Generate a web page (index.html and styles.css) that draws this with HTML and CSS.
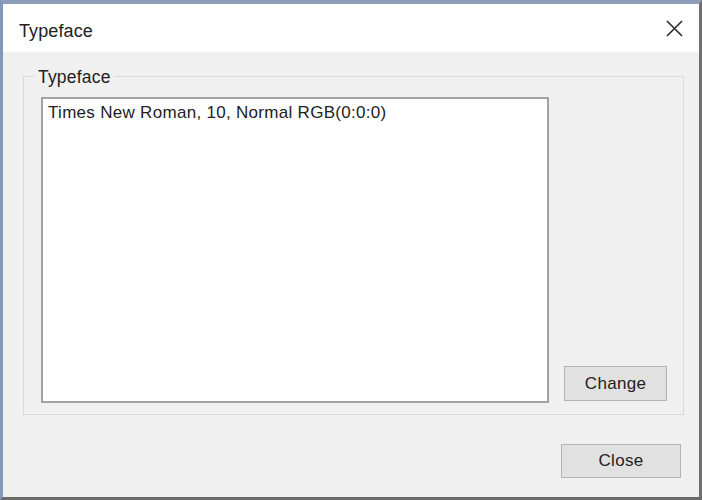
FILE: index.html
```html
<!DOCTYPE html>
<html>
<head>
<meta charset="utf-8">
<link rel="stylesheet" href="styles.css">
</head>
<body>
<div class="window">
  <div class="titlebar">
    <span class="title">Typeface</span>
    <span class="close-x">
      <svg width="17" height="17" viewBox="0 0 17 17"><path d="M1 1 L16 16 M16 1 L1 16" stroke="#2b2b2b" stroke-width="1.6" fill="none"/></svg>
    </span>
  </div>
  <div class="content">
    <fieldset class="group">
      <legend class="group-label">Typeface</legend>
      <div class="group-inner">
        <div class="listbox">
          <div class="item">Times New Roman, 10, Normal RGB(0:0:0)</div>
        </div>
        <button class="btn btn-change">Change</button>
      </div>
    </fieldset>
    <div class="footer">
      <button class="btn btn-close">Close</button>
    </div>
  </div>
</div>
</body>
</html>
```
FILE: styles.css
```css
html, body {
  margin: 0;
  padding: 0;
  width: 702px;
  height: 500px;
  overflow: hidden;
}
body {
  font-family: "Liberation Sans", Arial, sans-serif;
  color: #1e1e1e;
  background: #f0f0f0;
}
.window {
  box-sizing: border-box;
  width: 702px;
  height: 500px;
  border-style: solid;
  border-width: 4px 3px 3px 3px;
  border-color: #8d9cb9 #707070 #6a6a6a #8397bb;
  display: flex;
  flex-direction: column;
  background: #f0f0f0;
}
.titlebar {
  height: 48px;
  flex: none;
  background: #ffffff;
  display: flex;
  align-items: center;
  justify-content: space-between;
  padding: 0 16px 0 16px;
}
.title {
  font-size: 18px;
  line-height: 20px;
  letter-spacing: 0.1px;
  color: #222222;
  margin-top: 5px;
}
.close-x {
  display: flex;
  width: 17px;
  height: 17px;
  margin-top: 1px;
}
.content {
  flex: 1;
  display: flex;
  flex-direction: column;
  padding: 14px 15px 0 20px;
}
.group {
  margin: 0;
  padding: 11px 16px 11px 17px;
  border: 1px solid #d9d9d9;
  min-width: 0;
}
.group-label {
  font-size: 17.5px;
  line-height: 18px;
  letter-spacing: 0.2px;
  padding: 2px 3px 0 3px;
  margin-left: -6px;
  color: #222222;
}
.group-inner {
  display: flex;
  align-items: flex-end;
  justify-content: space-between;
}
.listbox {
  box-sizing: border-box;
  width: 508px;
  height: 306px;
  background: #ffffff;
  border: 2px solid #a3a3a3;
  padding: 4px 5px;
}
.item {
  font-size: 17px;
  line-height: 20px;
  letter-spacing: 0.3px;
  color: #222222;
}
.btn {
  box-sizing: border-box;
  background: #e1e1e1;
  border: 1px solid #b3b3b3;
  font-family: "Liberation Sans", Arial, sans-serif;
  font-size: 17px;
  letter-spacing: 0.3px;
  color: #222222;
  padding: 0;
}
.btn-change {
  width: 103px;
  height: 35px;
  margin-bottom: 2px;
}
.footer {
  display: flex;
  justify-content: flex-end;
  margin-top: 29px;
  padding-right: 3px;
}
.btn-close {
  width: 120px;
  height: 34px;
}
```
